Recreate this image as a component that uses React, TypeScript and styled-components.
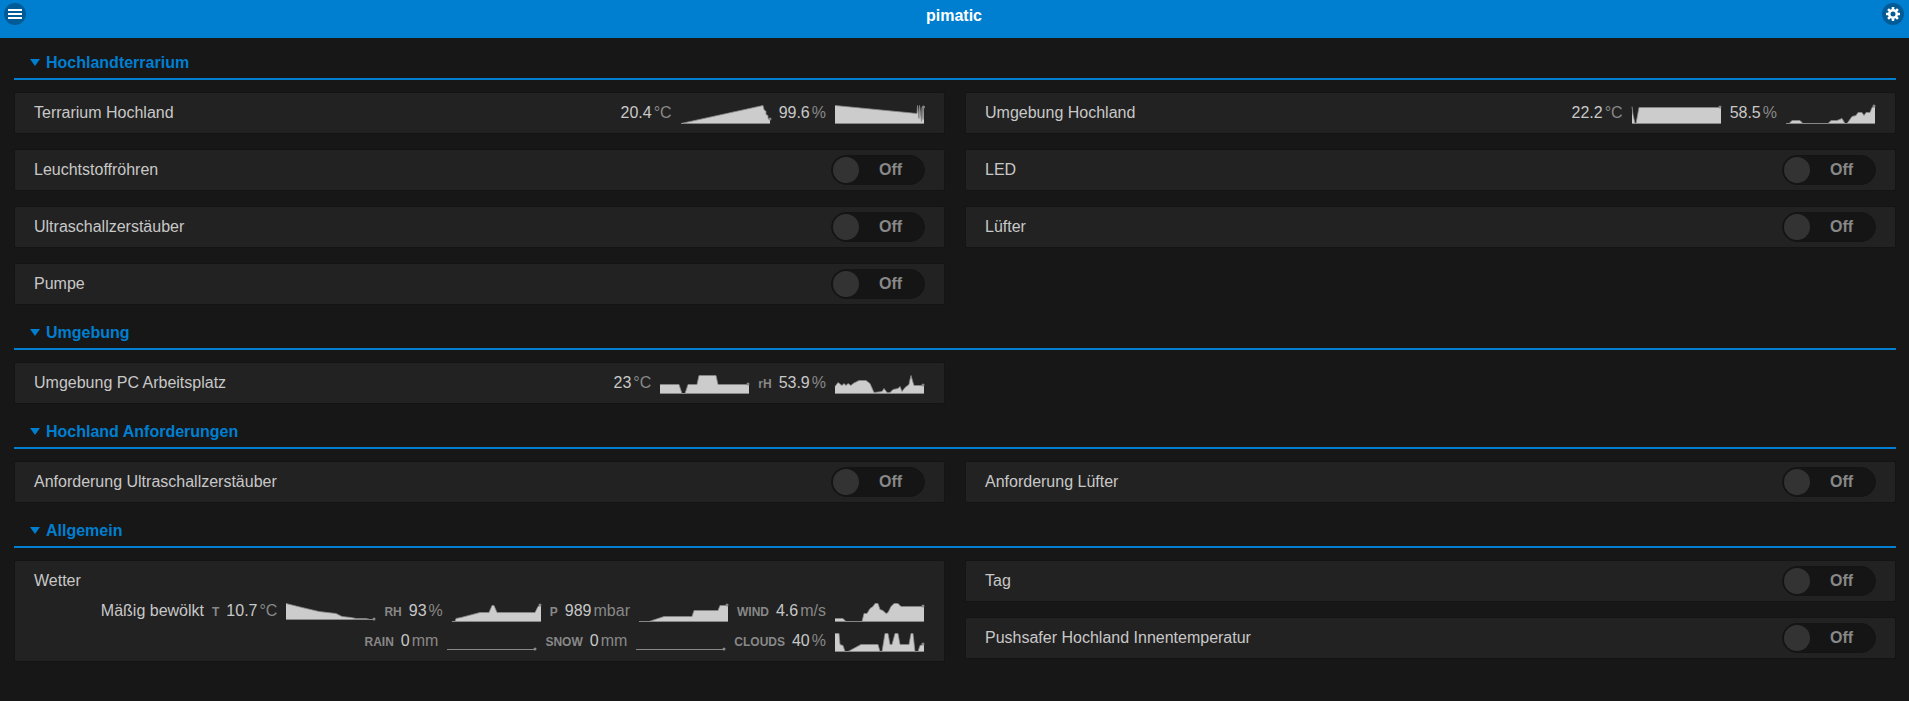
import { useId, useState, type ReactNode } from "react";
import styled, { createGlobalStyle } from "styled-components";

const GlobalStyle = createGlobalStyle`
  *, *::before, *::after { box-sizing: border-box; }
  html { background: #171717; }
  body {
    margin: 0;
    color: #c8c8c8;
    font: 16px/23px "Liberation Sans", Arial, Helvetica, sans-serif;
  }
`;

const Header = styled.header`
  display: flex;
  align-items: flex-start;
  justify-content: space-between;
  height: 38px;
  padding: 3px 5px 0 4px;
  background: #007fd0;
`;

const Title = styled.h1`
  margin: 3px 0 0;
  color: #fff;
  font-size: 16px;
  font-weight: bold;
  line-height: 20px;
  text-align: center;
`;

const IconButton = styled.button`
  display: grid;
  place-items: center;
  width: 22px;
  height: 22px;
  padding: 0;
  border: 0;
  border-radius: 50%;
  background: #005b96;
  color: #fff;
  cursor: pointer;

  svg { display: block; }
`;

const Page = styled.main`
  padding: 0 13px 20px 14px;
`;

const SectionHead = styled.h2<{ $first?: boolean }>`
  margin: 0 0 12px;
  padding: ${(p) => (p.$first ? "13px" : "16px")} 0 4px;
  border-bottom: 2px solid #007fd0;
  font-size: 16px;
  line-height: 23px;
`;

const SectionToggle = styled.button`
  display: flex;
  align-items: center;
  gap: 6px;
  padding: 0 16px;
  border: 0;
  background: none;
  color: #007fd0;
  font: inherit;
  cursor: pointer;

  svg { display: block; }
`;

const CardGrid = styled.div`
  display: grid;
  grid-template-columns: repeat(2, minmax(0, 1fr));
  gap: 15px 20px;
  align-items: start;
`;

const Column = styled.div`
  display: flex;
  flex-direction: column;
  gap: 15px;
`;

const Card = styled.div`
  border: 1px solid #141414;
  border-radius: 2px;
  background: #222;
  padding: 8px 19px 9px;
  display: flex;
  flex-wrap: wrap;
  justify-content: space-between;
  gap: 7px 9px;
`;

const SwitchCard = styled(Card)`
  padding: 5px 19px;
`;

const SwitchLabel = styled.label`
  padding: 3px 0 4px;
`;

const SwitchBox = styled.span`
  position: relative;
  width: 94px;
  height: 30px;
  border: 1px solid #141414;
  border-radius: 15px;
  background: #151515;
`;

const SwitchInput = styled.input`
  position: absolute;
  inset: -1px;
  margin: 0;
  appearance: none;
  border-radius: 15px;
  cursor: pointer;

  &::before {
    content: "";
    position: absolute;
    top: 2px;
    left: 2px;
    width: 26px;
    height: 26px;
    border-radius: 50%;
    background: #333;
  }
  &:checked::before { left: 66px; }
`;

const SwitchText = styled.span<{ $on: boolean }>`
  display: block;
  padding: ${(p) => (p.$on ? "0 25px 0 0" : "0 0 0 25px")};
  color: #888;
  font-weight: bold;
  line-height: 27px;
  text-align: center;
`;

const Readings = styled.div<{ $wide?: boolean }>`
  display: flex;
  justify-content: flex-end;
  gap: 8px;
  flex: ${(p) => (p.$wide ? "0 0 100%" : "0 1 auto")};
`;

const Reading = styled.div`
  display: flex;
  align-items: center;
`;

const Figures = styled.div`
  display: flex;
  align-items: baseline;
  height: 23px;
  margin-right: 9px;
`;

const Acronym = styled.span`
  margin-right: 7px;
  color: #888;
  font-size: 12px;
  font-weight: bold;
  line-height: 16px;
`;

const Unit = styled.span`
  margin-left: 2px;
  color: #888;
`;

const Spark = styled.svg`
  display: block;
  flex: none;
  overflow: visible;
`;

type Point = [number, number];

const flat: Point[] = [[0, 17], [88, 17]];

const series: Record<string, Point[]> = {
  terrariumTemp: [[0, 19], [82, 1], [83, 5], [85, 7], [85, 10], [87, 11], [87, 14], [89, 15]],
  terrariumHumidity: [[0, 1], [82, 9], [82.5, 1], [84, 14], [84.5, 1], [86.500, 17], [87, 3], [88, 15], [88.500, 3]],
  outdoorTemp: [[0, 2], [1, 10], [3, 19], [4, 19], [7, 3], [88, 3]],
  outdoorHumidity: [[0, 19], [3, 19], [6, 16], [14, 16], [17, 19], [42, 19], [45, 16], [51, 16], [56, 14], [59, 19], [61, 19], [66, 12], [70, 11], [72, 8], [76, 8], [78, 11], [80, 8], [84, 8], [86, 3], [88, 2]],
  officeTemp: [[0, 10], [19, 10], [22, 19], [25, 19], [28, 10], [37, 10], [39, 1], [56, 1], [58, 10], [88, 10]],
  officeHumidity: [[0, 12], [3, 8], [7, 11], [9, 9], [11, 11], [13, 9], [16, 11], [18, 9], [24, 6], [31, 6], [35, 9], [39, 18], [47, 17], [49, 14], [52, 18], [55, 18], [58, 15], [63, 14], [65, 12], [67, 17], [70, 13], [74, 10], [75, 5], [76, 1], [78, 8], [79, 11], [88, 11]],
  weatherTemp: [[0, 1], [16, 5], [33, 9], [50, 11], [56, 14], [65, 15], [70, 16], [80, 16], [84, 17], [88, 17]],
  weatherHumidity: [[0, 19], [3, 19], [4, 16], [9, 15], [28, 10], [37, 10], [40, 3], [42, 3], [45, 10], [83, 10], [86, 4], [88, 3]],
  pressure: [[0, 19], [10, 19], [25, 14], [53, 14], [55, 8], [79, 8], [81, 3], [88, 3]],
  wind: [[0, 16], [8, 16], [11, 19], [27, 19], [29, 11], [32, 11], [35, 6], [38, 4], [40, 1], [43, 1], [45, 7], [48, 8], [51, 11], [53, 10], [56, 4], [59, 1], [63, 1], [66, 4], [88, 4]],
  clouds: [[0, 1], [4, 1], [5, 12], [8, 13], [10, 19], [13, 19], [26, 12], [43, 12], [45, 19], [47, 19], [50, 1], [53, 1], [55, 12], [57, 12], [60, 1], [63, 1], [65, 12], [74, 12], [76, 1], [78, 1], [80, 19], [83, 19], [85, 13], [88, 12]],
  rain: flat,
  snow: flat,
};

function Sparkline({ name }: { name: string }) {
  const points = series[name];
  const isLow = name === "weatherTemp" || points === flat;
  const base = isLow ? 17 : 19;
  const line = points.map(([x, y]) => `${x},${y + 0.5}`).join(" ");
  const [lastX, lastY] = points[points.length - 1];
  return (
    <Spark width="90" height="23" viewBox="0 -3 90 23" aria-hidden="true">
      <polygon points={`0,${base + 0.5} ${line} 89,${lastY + 0.5} 89,${base + 0.5}`} fill="#ccc" />
      <polyline points={line} fill="none" stroke="#888" strokeWidth="0.8" strokeLinejoin="bevel" />
      <path d={`M0 ${base + 0.5}H89`} stroke="#888" />
      <circle cx={lastX} cy={lastY} r="1.5" fill="#888" />
    </Spark>
  );
}

const teeth = [0, 45, 90, 135, 180, 225, 270, 315];

function GearIcon() {
  return (
    <svg width="14" height="14" viewBox="0 0 14 14" aria-hidden="true">
      <circle cx="7" cy="7" r="3.800" fill="none" stroke="currentColor" strokeWidth="2.600" />
      {teeth.map((angle) => (
        <rect key={angle} x="5.700" y="0" width="2.600" height="2.600" rx="0.400" fill="currentColor" transform={`rotate(${angle} 7 7)`} />
      ))}
    </svg>
  );
}

type ReadingProps = { label?: string; value: string; unit: string; spark: string };

function Measure({ label, value, unit, spark }: ReadingProps) {
  return (
    <Reading>
      <Figures>
        {label && <Acronym>{label}</Acronym>}
        <span>{value}</span>
        <Unit>{unit}</Unit>
      </Figures>
      <Sparkline name={spark} />
    </Reading>
  );
}

function SwitchDevice({ name }: { name: string }) {
  const id = useId();
  const [on, setOn] = useState(false);
  return (
    <SwitchCard>
      <SwitchLabel htmlFor={id}>{name}</SwitchLabel>
      <SwitchBox>
        <SwitchText $on={on}>{on ? "On" : "Off"}</SwitchText>
        <SwitchInput id={id} type="checkbox" role="switch" checked={on} onChange={(e) => setOn(e.target.checked)} />
      </SwitchBox>
    </SwitchCard>
  );
}

function SensorDevice({ name, readings }: { name: string; readings: ReadingProps[] }) {
  return (
    <Card>
      <span>{name}</span>
      <Readings>
        {readings.map((r) => <Measure key={r.spark} {...r} />)}
      </Readings>
    </Card>
  );
}

function Section({ title, first, children }: { title: string; first?: boolean; children: ReactNode }) {
  const [open, setOpen] = useState(true);
  return (
    <section>
      <SectionHead $first={first}>
        <SectionToggle type="button" aria-expanded={open} onClick={() => setOpen(!open)}>
          <svg width="10" height="7" viewBox="0 0 10 7" aria-hidden="true">
            <path d={open ? "M0 0H10L5 7Z" : "M2 0L8 3.500L2 7Z"} fill="currentColor" />
          </svg>
          {title}
        </SectionToggle>
      </SectionHead>
      {open && <CardGrid>{children}</CardGrid>}
    </section>
  );
}

export default function App() {
  return (
    <>
      <GlobalStyle />
      <Header>
        <IconButton type="button" aria-label="Menu">
          <svg width="14" height="10" viewBox="0 0 14 10" fill="currentColor" aria-hidden="true">
            <path d="M0 0H14V2H0ZM0 4H14V6H0ZM0 8H14V10H0Z" />
          </svg>
        </IconButton>
        <Title>pimatic</Title>
        <IconButton type="button" aria-label="Settings">
          <GearIcon />
        </IconButton>
      </Header>
      <Page>
        <Section title="Hochlandterrarium" first>
          <SensorDevice
            name="Terrarium Hochland"
            readings={[
              { value: "20.4", unit: "°C", spark: "terrariumTemp" },
              { value: "99.6", unit: "%", spark: "terrariumHumidity" },
            ]}
          />
          <SensorDevice
            name="Umgebung Hochland"
            readings={[
              { value: "22.2", unit: "°C", spark: "outdoorTemp" },
              { value: "58.5", unit: "%", spark: "outdoorHumidity" },
            ]}
          />
          <SwitchDevice name="Leuchtstoffröhren" />
          <SwitchDevice name="LED" />
          <SwitchDevice name="Ultraschallzerstäuber" />
          <SwitchDevice name="Lüfter" />
          <SwitchDevice name="Pumpe" />
        </Section>
        <Section title="Umgebung">
          <SensorDevice
            name="Umgebung PC Arbeitsplatz"
            readings={[
              { value: "23", unit: "°C", spark: "officeTemp" },
              { label: "rH", value: "53.9", unit: "%", spark: "officeHumidity" },
            ]}
          />
        </Section>
        <Section title="Hochland Anforderungen">
          <SwitchDevice name="Anforderung Ultraschallzerstäuber" />
          <SwitchDevice name="Anforderung Lüfter" />
        </Section>
        <Section title="Allgemein">
          <Card>
            <span>Wetter</span>
            <Readings $wide>
              <span>Mäßig bewölkt</span>
              <Measure label="T" value="10.7" unit="°C" spark="weatherTemp" />
              <Measure label="RH" value="93" unit="%" spark="weatherHumidity" />
              <Measure label="P" value="989" unit="mbar" spark="pressure" />
              <Measure label="WIND" value="4.6" unit="m/s" spark="wind" />
            </Readings>
            <Readings $wide>
              <Measure label="RAIN" value="0" unit="mm" spark="rain" />
              <Measure label="SNOW" value="0" unit="mm" spark="snow" />
              <Measure label="CLOUDS" value="40" unit="%" spark="clouds" />
            </Readings>
          </Card>
          <Column>
            <SwitchDevice name="Tag" />
            <SwitchDevice name="Pushsafer Hochland Innentemperatur" />
          </Column>
        </Section>
      </Page>
    </>
  );
}
